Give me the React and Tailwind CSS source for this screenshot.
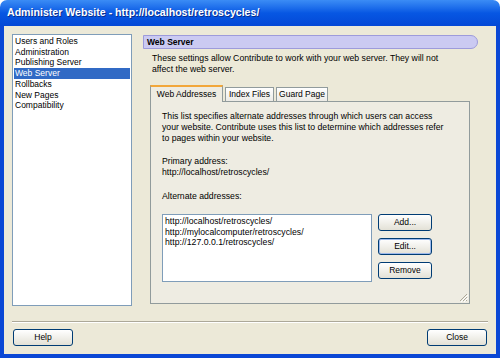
import React from "react";

const sections = [
  "Users and Roles",
  "Administration",
  "Publishing Server",
  "Web Server",
  "Rollbacks",
  "New Pages",
  "Compatibility",
];

const addresses = [
  "http://localhost/retroscycles/",
  "http://mylocalcomputer/retroscycles/",
  "http://127.0.0.1/retroscycles/",
];

function XpButton({ children, focused, className = "" }) {
  return (
    <button
      className={`h-[17px] rounded-[3px] border border-[#003C74] bg-linear-to-b from-white to-[#E3E1D6] text-[8.5px] leading-none text-black ${
        focused ? "shadow-[inset_0_0_0_1px_#9DB9EB]" : ""
      } ${className}`}
    >
      {children}
    </button>
  );
}

function Grip() {
  return (
    <svg width="9" height="9" viewBox="0 0 9 9">
      <path d="M8 1 L1 8 M8 4 L4 8 M8 7 L7 8" stroke="#ACA899" strokeWidth="1" />
      <path d="M9 2 L2 9 M9 5 L5 9" stroke="#FFFFFF" strokeWidth="1" />
    </svg>
  );
}

export default function App() {
  return (
    <div className="w-[500px] h-[358px] flex flex-col overflow-hidden font-['Liberation_Sans',Arial,sans-serif] text-black">
      {/* title bar */}
      <div className="h-[26px] shrink-0 rounded-t-[7px] bg-linear-to-b from-[#3B8CF5] via-[#0757E3] to-[#0448D6] flex items-center pl-[7px] text-white font-bold text-[10.6px] [text-shadow:1px_1px_0_#0A2E8C]">
        Administer Website - http://localhost/retroscycles/
      </div>

      <div className="flex-1 flex flex-col bg-[#ECE9D8] border-x-4 border-b-4 border-[#0A47D5]">
        <div className="flex pt-[8px] pl-[8px]">
          {/* category list */}
          <div className="w-[120px] h-[272px] bg-white border border-[#7F9DB9] p-[1px] text-[8.5px] leading-[10.7px]">
            {sections.map((s) => (
              <div
                key={s}
                className={`pl-[1px] ${
                  s === "Web Server" ? "bg-[#316AC5] text-white" : ""
                }`}
              >
                {s}
              </div>
            ))}
          </div>

          {/* right column */}
          <div className="ml-[11px] w-[335px] flex flex-col">
            <div className="mt-[1px] h-[14px] rounded-r-full border border-[#9D9BDB] bg-[#CBCAF2] flex items-center pl-[3px] text-[8.5px] font-bold">
              Web Server
            </div>
            <div className="mt-[4px] pl-[9px] text-[8.7px] leading-[11px] whitespace-nowrap">
              <div>These settings allow Contribute to work with your web server. They will not</div>
              <div>affect the web server.</div>
            </div>

            {/* tabs */}
            <div className="mt-[10px] ml-[7px] flex items-end text-[8.5px]">
              <div className="relative z-10 -mb-px w-[73px] h-[17px] border-x border-[#919B9C] border-t-[2px] border-t-[#F2A73A] bg-[#EEECE2] flex items-center justify-center">
                Web Addresses
              </div>
              <div className="ml-[2px] w-[49px] h-[14px] border-x border-t border-[#919B9C] bg-linear-to-b from-white to-[#ECEBE6] flex items-center justify-center">
                Index Files
              </div>
              <div className="ml-[2px] w-[52px] h-[14px] border-x border-t border-[#919B9C] bg-linear-to-b from-white to-[#ECEBE6] flex items-center justify-center">
                Guard Page
              </div>
            </div>

            <div className="relative ml-[7px] w-[320px] h-[203px] border border-[#919B9C] bg-[#EEECE2] pt-[9px] pl-[11px] text-[8.7px] leading-[11px] whitespace-nowrap">
              <div>This list specifies alternate addresses through which users can access</div>
              <div>your website. Contribute uses this list to determine which addresses refer</div>
              <div>to pages within your website.</div>

              <div className="mt-[12px]">Primary address:</div>
              <div>http://localhost/retroscycles/</div>

              <div className="mt-[13px]">Alternate addresses:</div>
              <div className="mt-[12px] flex">
                <div className="w-[210px] h-[68px] bg-white border border-[#7F9DB9] pl-[2px] pt-[1px] leading-[10.5px]">
                  {addresses.map((a) => (
                    <div key={a}>{a}</div>
                  ))}
                </div>
                <div className="ml-[6px] flex flex-col gap-[7px]">
                  <XpButton className="w-[54px]">Add...</XpButton>
                  <XpButton className="w-[54px]" focused>
                    Edit...
                  </XpButton>
                  <XpButton className="w-[54px]">Remove</XpButton>
                </div>
              </div>

              <div className="absolute right-[1px] bottom-[1px]">
                <Grip />
              </div>
            </div>
          </div>
        </div>

        {/* separator */}
        <div className="mt-[15px] mx-[8px] border-t border-[#ACA899] border-b border-b-white" />

        <div className="mt-[6px] px-[9px] flex justify-between">
          <XpButton className="w-[60px]">Help</XpButton>
          <XpButton className="w-[60px]">Close</XpButton>
        </div>
      </div>
    </div>
  );
}
